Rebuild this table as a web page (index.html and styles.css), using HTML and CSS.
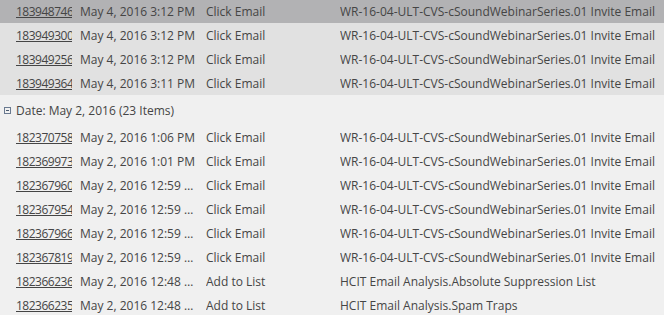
FILE: index.html
```html
<!DOCTYPE html>
<html>
<head>
<meta charset="utf-8">
<link rel="stylesheet" href="styles.css">
</head>
<body>
<div class="grid">
  <div class="row row-selected">
    <div class="c-id"><a href="#">183948746</a></div>
    <div class="c-date">May 4, 2016 3:12 PM</div>
    <div class="c-act">Click Email</div>
    <div class="c-det">WR-16-04-ULT-CVS-cSoundWebinarSeries.01 Invite Email</div>
  </div>
  <div class="row row-shade">
    <div class="c-id"><a href="#">183949300</a></div>
    <div class="c-date">May 4, 2016 3:12 PM</div>
    <div class="c-act">Click Email</div>
    <div class="c-det">WR-16-04-ULT-CVS-cSoundWebinarSeries.01 Invite Email</div>
  </div>
  <div class="row row-shade">
    <div class="c-id"><a href="#">183949256</a></div>
    <div class="c-date">May 4, 2016 3:12 PM</div>
    <div class="c-act">Click Email</div>
    <div class="c-det">WR-16-04-ULT-CVS-cSoundWebinarSeries.01 Invite Email</div>
  </div>
  <div class="row row-shade">
    <div class="c-id"><a href="#">183949364</a></div>
    <div class="c-date">May 4, 2016 3:11 PM</div>
    <div class="c-act">Click Email</div>
    <div class="c-det">WR-16-04-ULT-CVS-cSoundWebinarSeries.01 Invite Email</div>
  </div>

  <div class="group">
    <span class="toggle"></span>
    <span>Date: May 2, 2016 (23 Items)</span>
  </div>

  <div class="row">
    <div class="c-id"><a href="#">182370758</a></div>
    <div class="c-date">May 2, 2016 1:06 PM</div>
    <div class="c-act">Click Email</div>
    <div class="c-det">WR-16-04-ULT-CVS-cSoundWebinarSeries.01 Invite Email</div>
  </div>
  <div class="row">
    <div class="c-id"><a href="#">182369973</a></div>
    <div class="c-date">May 2, 2016 1:01 PM</div>
    <div class="c-act">Click Email</div>
    <div class="c-det">WR-16-04-ULT-CVS-cSoundWebinarSeries.01 Invite Email</div>
  </div>
  <div class="row">
    <div class="c-id"><a href="#">182367960</a></div>
    <div class="c-date">May 2, 2016 12:59 PM</div>
    <div class="c-act">Click Email</div>
    <div class="c-det">WR-16-04-ULT-CVS-cSoundWebinarSeries.01 Invite Email</div>
  </div>
  <div class="row">
    <div class="c-id"><a href="#">182367954</a></div>
    <div class="c-date">May 2, 2016 12:59 PM</div>
    <div class="c-act">Click Email</div>
    <div class="c-det">WR-16-04-ULT-CVS-cSoundWebinarSeries.01 Invite Email</div>
  </div>
  <div class="row">
    <div class="c-id"><a href="#">182367966</a></div>
    <div class="c-date">May 2, 2016 12:59 PM</div>
    <div class="c-act">Click Email</div>
    <div class="c-det">WR-16-04-ULT-CVS-cSoundWebinarSeries.01 Invite Email</div>
  </div>
  <div class="row">
    <div class="c-id"><a href="#">182367819</a></div>
    <div class="c-date">May 2, 2016 12:59 PM</div>
    <div class="c-act">Click Email</div>
    <div class="c-det">WR-16-04-ULT-CVS-cSoundWebinarSeries.01 Invite Email</div>
  </div>
  <div class="row">
    <div class="c-id"><a href="#">182366236</a></div>
    <div class="c-date">May 2, 2016 12:48 PM</div>
    <div class="c-act">Add to List</div>
    <div class="c-det">HCIT Email Analysis.Absolute Suppression List</div>
  </div>
  <div class="row">
    <div class="c-id"><a href="#">182366235</a></div>
    <div class="c-date">May 2, 2016 12:48 PM</div>
    <div class="c-act">Add to List</div>
    <div class="c-det">HCIT Email Analysis.Spam Traps</div>
  </div>
</div>
</body>
</html>
```

FILE: styles.css
```css
html, body {
  margin: 0;
  padding: 0;
  background: #f0f0f0;
}
body {
  font-family: "Open Sans", "Liberation Sans", sans-serif;
  font-size: 12px;
  color: #454545;
  overflow: hidden;
}
.grid {
  display: flex;
  flex-direction: column;
  margin-top: -1px;
}
.row {
  display: grid;
  grid-template-columns: 56px 118px 126px 1fr;
  column-gap: 8px;
  padding-left: 16px;
  height: 24px;
  align-items: center;
  white-space: nowrap;
}
.row-selected {
  background: #b2b2b4;
}
.row-shade {
  background: #e1e1e1;
}
.row > div {
  overflow: hidden;
}
.c-id {
  text-overflow: clip;
}
.c-id a {
  color: #454545;
  text-decoration: underline;
  letter-spacing: -0.5px;
}
.c-date {
  text-overflow: ellipsis;
}
.group {
  height: 30px;
  display: flex;
  align-items: center;
  gap: 5px;
  padding-left: 4px;
  white-space: nowrap;
}
.toggle {
  width: 5px;
  height: 5px;
  border: 1px solid #6a7a90;
  position: relative;
  flex: none;
}
.toggle::after {
  content: "";
  position: absolute;
  left: 1px;
  top: 2px;
  width: 3px;
  height: 1px;
  background: #4a5a70;
}
```
